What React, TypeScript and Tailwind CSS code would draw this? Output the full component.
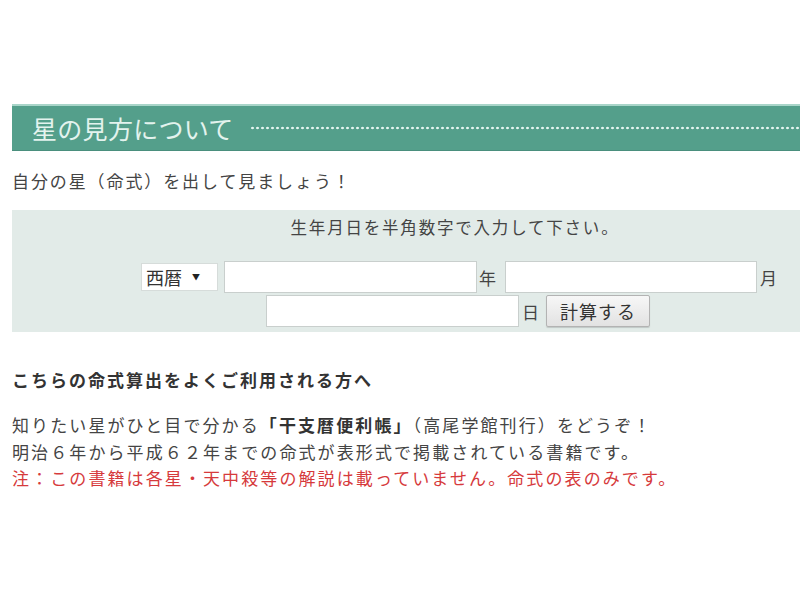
const font = { fontFamily: '"Noto Sans CJK JP", "Noto Sans", sans-serif' }

const App = () => {
  return (
    <div className="w-[800px] h-[600px] overflow-hidden bg-white" style={font}>
      <div className="w-[886px] ml-3 pt-[104px]">
        {/* header bar */}
        <div className="h-[47px] bg-[#549f8b] border-t-2 border-t-[#a9d5c9] border-b border-b-[#4a8f7d] flex items-center pl-5">
          <h1 className="text-[25px] leading-none text-[#e3f3ee] tracking-[0.3px] whitespace-nowrap">
            星の見方について
          </h1>
          <div className="ml-[16px] flex-1 h-[4px] bg-[radial-gradient(circle,#e6f6f1_1px,transparent_1.6px)] bg-[length:5px_4px]" />
        </div>

        <p className="mt-[18px] text-[17px] leading-[24px] tracking-[1.9px] text-[#444]">
          自分の星（命式）を出して見ましょう！
        </p>

        {/* form box */}
        <div className="mt-[17px] h-[122px] bg-[#e2ebe8] pt-[5px]">
          <p className="text-center text-[16.5px] leading-[24px] tracking-[1.8px] text-[#444]">
            生年月日を半角数字で入力して下さい。
          </p>
          <div className="mt-[22px] pl-[6px] flex items-center justify-center text-[17px] text-[#444]">
            <div className="w-[77px] h-[28px] bg-white border border-[#d6dcda] flex items-center px-[4px]">
              <span className="text-[18px] leading-none text-[#333]">西暦</span>
              <span className="ml-[10px] text-[8px] text-[#222]">▼</span>
            </div>
            <div className="ml-[6px] w-[253px] h-[32px] bg-white border border-[#c9cfcd]" />
            <span className="w-[28px] pl-[2px] leading-none">年</span>
            <div className="w-[252px] h-[32px] bg-white border border-[#c9cfcd]" />
            <span className="w-[18px] pl-[3px] leading-none">月</span>
          </div>
          <div className="mt-[2px] pl-[6px] flex items-center justify-center text-[17px] text-[#444]">
            <div className="w-[253px] h-[32px] bg-white border border-[#c9cfcd]" />
            <span className="w-[27px] pl-[3px] leading-none">日</span>
            <button className="w-[104px] h-[32px] border border-[#b3b3b3] rounded-[2px] bg-[linear-gradient(#f7f7f7,#e2e2e2)] text-[18px] tracking-[1px] text-[#333] shadow-[0_1px_1px_rgba(0,0,0,0.15)]">
              計算する
            </button>
          </div>
        </div>

        <h2 className="mt-[36px] text-[17px] font-bold leading-[24px] tracking-[2px] text-[#333]">
          こちらの命式算出をよくご利用される方へ
        </h2>

        <div className="mt-[20px] text-[17px] leading-[26.5px] tracking-[2.1px] text-[#444]">
          <p>
            知りたい星がひと目で分かる<span className="font-bold text-[#333]">「干支暦便利帳」</span>（高尾学館刊行）をどうぞ！
          </p>
          <p>明治６年から平成６２年までの命式が表形式で掲載されている書籍です。</p>
          <p className="text-[#d63a3c]">注：この書籍は各星・天中殺等の解説は載っていません。命式の表のみです。</p>
        </div>
      </div>
    </div>
  )
}

export default App
